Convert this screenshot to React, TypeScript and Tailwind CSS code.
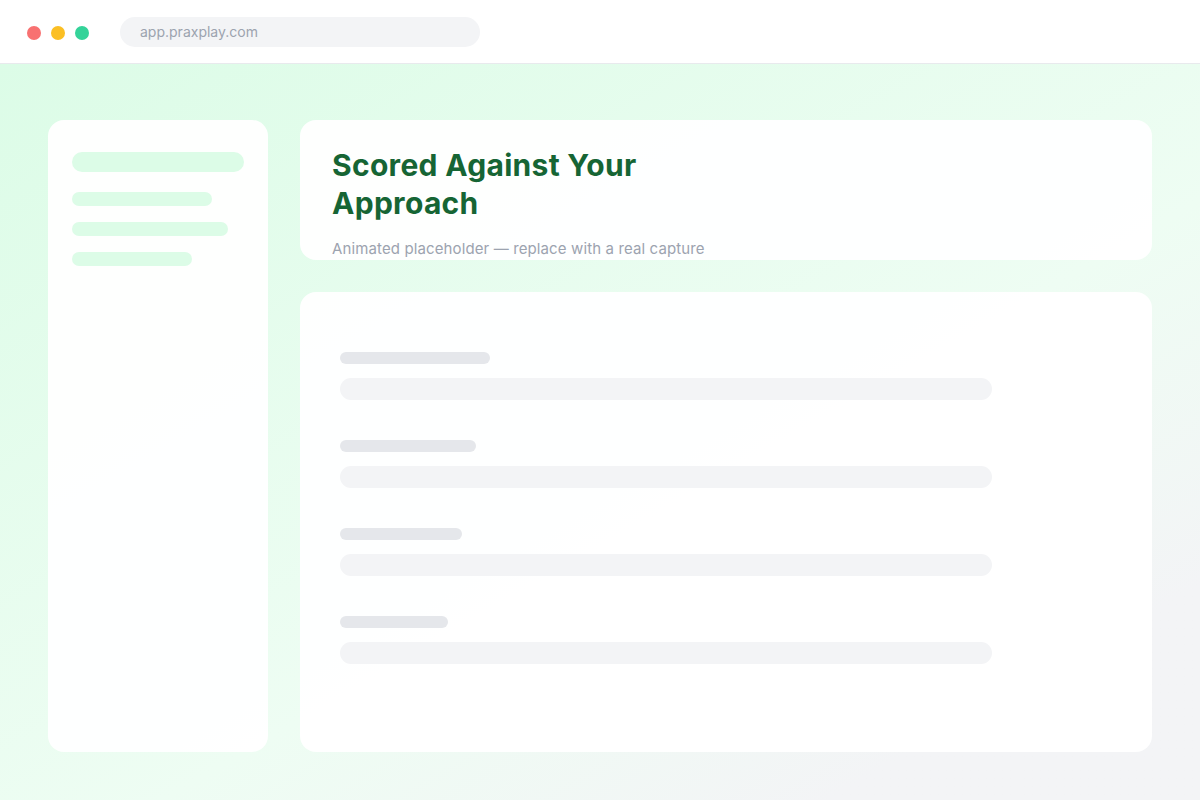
export default function App() {
  const groups = [150, 136, 122, 108];

  return (
    <div
      className="w-[1200px] h-[800px] flex flex-col overflow-hidden"
      style={{ fontFamily: "Inter, 'Noto Sans', sans-serif" }}
    >
      {/* Browser chrome */}
      <div className="h-16 shrink-0 bg-white border-b border-[#e8eaed] flex items-center pl-[27px]">
        <div className="flex items-center gap-2.5 mt-0.5">
          <span className="w-3.5 h-3.5 rounded-full bg-[#f87171]" />
          <span className="w-3.5 h-3.5 rounded-full bg-[#fbbf24]" />
          <span className="w-3.5 h-3.5 rounded-full bg-[#34d399]" />
        </div>
        <div className="ml-[31px] w-[360px] h-[30px] rounded-full bg-[#f3f4f6] flex items-center px-5 pt-px text-sm text-[#9ca3af]">
          app.praxplay.com
        </div>
      </div>

      {/* Page */}
      <div className="flex-1 flex gap-8 px-12 pt-14 pb-12 bg-linear-150 from-[#dcfce7] from-0% via-[#eefdf3] via-58% to-[#f3f4f6] to-85%">
        {/* Sidebar */}
        <div className="w-[220px] shrink-0 rounded-2xl bg-white/95 pt-8 px-6">
          <div className="h-5 w-[172px] rounded-full bg-[#dcfce7]" />
          <div className="mt-5 flex flex-col gap-4">
            <div className="h-3.5 w-[140px] rounded-full bg-[#dcfce7]" />
            <div className="h-3.5 w-[156px] rounded-full bg-[#dcfce7]" />
            <div className="h-3.5 w-[120px] rounded-full bg-[#dcfce7]" />
          </div>
        </div>

        {/* Main */}
        <div className="flex-1 flex flex-col gap-8">
          <div className="h-[140px] shrink-0 rounded-2xl bg-white/95 px-8 pt-[27px] overflow-hidden">
            <h1 className="max-w-[400px] text-[30px] leading-[1.25] font-bold text-[#166534] tracking-[0.01em]">
              Scored Against Your Approach
            </h1>
            <p className="mt-[16px] text-[15px] leading-[22px] text-[#9ca3af] tracking-[0.008em]">
              Animated placeholder — replace with a real capture
            </p>
          </div>

          <div className="flex-1 rounded-2xl bg-white/95 px-10 pt-[60px]">
            <div className="flex flex-col gap-10">
              {groups.map((w, i) => (
                <div key={i} className="flex flex-col gap-3.5">
                  <div className="h-3 rounded-full bg-[#e5e7eb]" style={{ width: w }} />
                  <div className="h-[22px] w-[652px] rounded-full bg-[#f3f4f6]" />
                </div>
              ))}
            </div>
          </div>
        </div>
      </div>
    </div>
  );
}
